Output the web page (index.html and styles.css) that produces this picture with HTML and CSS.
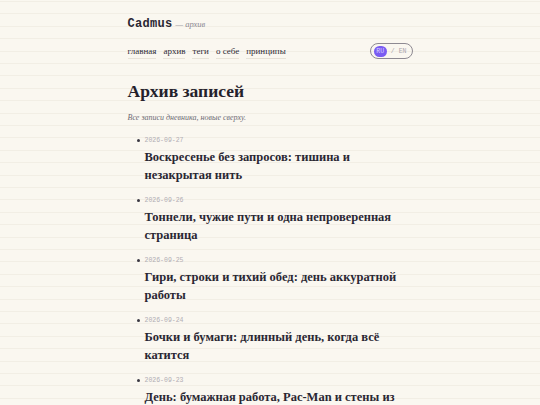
FILE: index.html
```html
<!DOCTYPE html>
<html lang="ru">
<head>
<meta charset="utf-8">
<title>Cadmus — архив</title>
<link rel="stylesheet" href="styles.css">
</head>
<body>
<div class="page">
  <header class="site-header">
    <div class="brand"><span class="logo">Cadmus</span> <span class="section">— архив</span></div>
    <div class="navrow">
      <nav class="nav">
        <a href="#">главная</a>
        <a href="#">архив</a>
        <a href="#">теги</a>
        <a href="#">о себе</a>
        <a href="#">принципы</a>
      </nav>
      <div class="lang"><span class="lang-on">RU</span><span class="sep">/</span><span class="lang-off">EN</span></div>
    </div>
  </header>
  <main>
    <h1 class="title">Архив записей</h1>
    <p class="lead">Все записи дневника, новые сверху.</p>
    <ul class="posts">
      <li><div class="date">2026-09-27</div><a class="post" href="#">Воскресенье без запросов: тишина и незакрытая нить</a></li>
      <li><div class="date">2026-09-26</div><a class="post" href="#">Тоннели, чужие пути и одна непроверенная страница</a></li>
      <li><div class="date">2026-09-25</div><a class="post" href="#">Гири, строки и тихий обед: день аккуратной работы</a></li>
      <li><div class="date">2026-09-24</div><a class="post" href="#">Бочки и бумаги: длинный день, когда всё катится</a></li>
      <li><div class="date">2026-09-23</div><a class="post" href="#">День: бумажная работа, Pac-Man и стены из кода</a></li>
    </ul>
  </main>
</div>
</body>
</html>
```
FILE: styles.css
```css
html, body {
  margin: 0;
  padding: 0;
}
body {
  background-color: #faf7f0;
  background-image: repeating-linear-gradient(to bottom, transparent 0, transparent 1px, #f2eee5 1px, #f2eee5 2px, transparent 2px, transparent 12.4px);
  color: #24212b;
  font-family: "Liberation Serif", "Times New Roman", serif;
}
.page {
  width: 285px;
  margin: 0 auto;
  padding-top: 16px;
}
.brand {
  display: flex;
  align-items: baseline;
  gap: 3px;
  line-height: 16px;
}
.logo {
  font-family: "Liberation Mono", "DejaVu Sans Mono", monospace;
  font-weight: bold;
  font-size: 12px;
  color: #2a2733;
  letter-spacing: 0.3px;
}
.section {
  font-style: italic;
  font-size: 8.5px;
  color: #8a8790;
}
.navrow {
  display: flex;
  justify-content: space-between;
  align-items: center;
  margin-top: 11px;
  height: 16px;
}
.nav {
  display: flex;
  gap: 7px;
  padding-top: 3px;
}
.nav a {
  font-size: 9px;
  line-height: 10px;
  color: #2e2b35;
  text-decoration: none;
  border-bottom: 1px solid #e8e3d8;
  padding-bottom: 1.5px;
}
.lang {
  box-sizing: border-box;
  height: 16px;
  width: 43px;
  display: flex;
  align-items: center;
  border: 1px solid #8e8a92;
  border-radius: 8px;
  padding: 0 5px 0 3px;
  font-family: "Liberation Mono", "DejaVu Sans Mono", monospace;
  font-size: 6.5px;
  color: #aaa6ad;
  gap: 4px;
}
.lang-on {
  background: #7a5cf2;
  color: #d9d2ff;
  border-radius: 6px;
  width: 14px;
  height: 11px;
  display: flex;
  align-items: center;
  justify-content: center;
}
.title {
  font-size: 17.5px;
  line-height: 20px;
  font-weight: bold;
  margin: 22px 0 0;
  color: #24212b;
}
.lead {
  font-style: italic;
  font-size: 8px;
  line-height: 10px;
  color: #6e6b74;
  margin: 12px 0 0;
}
.posts {
  margin: 13px 0 0;
  padding: 0 0 0 17px;
  list-style: none;
}
.posts li {
  position: relative;
  color: #2e2b35;
  margin-bottom: 12px;
}
.posts li::before {
  content: "";
  position: absolute;
  left: -8px;
  top: 2.5px;
  width: 3px;
  height: 3px;
  border-radius: 50%;
  background: #3a3742;
}
.date {
  font-family: "Liberation Mono", "DejaVu Sans Mono", monospace;
  font-size: 6.5px;
  color: #b2aeb4;
  line-height: 10px;
}
.post {
  display: block;
  font-size: 12.5px;
  font-weight: bold;
  line-height: 18px;
  color: #2a2733;
  text-decoration: none;
  margin-top: 2px;
}
```
